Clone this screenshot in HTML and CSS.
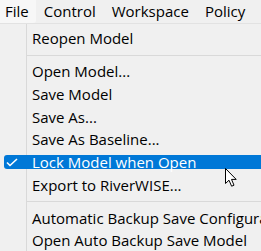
FILE: index.html
```html
<!DOCTYPE html>
<html lang="en">
<head>
    <meta charset="UTF-8">
    <meta name="viewport" content="width=device-width, initial-scale=1.0">
    <title>File Menu</title>
    <link rel="stylesheet" href="styles.css">
</head>
<body>
    <div class="menubar">
        <div class="menubar-item open">File</div>
        <div class="menubar-item">Control</div>
        <div class="menubar-item">Workspace</div>
        <div class="menubar-item">Policy</div>
    </div>

    <div class="dropdown">
        <div class="item"><div class="bar"><span class="mark"></span>Reopen Model</div></div>
        <div class="separator"></div>
        <div class="item"><div class="bar"><span class="mark"></span>Open Model...</div></div>
        <div class="item"><div class="bar"><span class="mark"></span>Save Model</div></div>
        <div class="item"><div class="bar"><span class="mark"></span>Save As...</div></div>
        <div class="item"><div class="bar"><span class="mark"></span>Save As Baseline...</div></div>
        <div class="item active">
            <div class="bar">
                <span class="mark">
                    <svg width="12" height="9" viewBox="0 0 12 9">
                        <polyline points="1,4.5 4,7.5 11,1" fill="none" stroke="#fff" stroke-width="1.6"/>
                    </svg>
                </span>Lock Model when Open
            </div>
        </div>
        <div class="item"><div class="bar"><span class="mark"></span>Export to RiverWISE...</div></div>
        <div class="separator"></div>
        <div class="item"><div class="bar"><span class="mark"></span>Automatic Backup Save Configuration...</div></div>
        <div class="item"><div class="bar"><span class="mark"></span>Open Auto Backup Save Model</div></div>
    </div>

    <!-- mouse pointer over the menu -->
    <svg class="cursor" width="13" height="20" viewBox="0 0 13 20">
        <path d="M0.5 0.5 L0.5 15.5 L4 12.2 L6.6 18.2 L9 17.2 L6.5 11.4 L11.2 11.4 Z" fill="#fff" stroke="#000" stroke-width="1" stroke-linejoin="miter"/>
    </svg>
</body>
</html>
```

FILE: styles.css
```css
body {
    margin: 0;
    background: #f0f0f0;
    color: #000;
    font-family: 'Open Sans', 'Noto Sans', sans-serif;
    font-size: 15px;
    overflow: hidden;
    white-space: nowrap;
    position: relative;
    height: 100vh;
}

.menubar {
    display: flex;
    height: 23px;
    line-height: 23px;
}

.menubar-item {
    padding: 0 8px;
}

.menubar-item.open {
    padding: 0 7px 0 5px;
    background: #f7f7f7;
    border-radius: 0 0 3px 0;
}

.dropdown {
    border-top: 1px solid #e2e2e2;
    padding-top: 3px;
    width: 320px;
    /* icon gutter with its divider */
    background: linear-gradient(to right, #f0f0f0 26px, #d9d9d9 26px, #d9d9d9 27px, #f0f0f0 27px);
}

.item {
    height: 22.75px;
    display: flex;
    align-items: center;
}

.bar {
    flex: 1;
    margin-left: 4px;
    height: 14px;
    line-height: 14px;
    display: flex;
    align-items: center;
    border-radius: 3px 0 0 3px;
}

.mark {
    width: 28px;
    flex: none;
    display: flex;
    align-items: center;
    padding-left: 2px;
    box-sizing: border-box;
}

.item.active .bar {
    background: #0078d7;
    color: #fff;
}

.separator {
    height: 1px;
    margin: 5px 0 4px 27px;
    background: #d9d9d9;
}

.cursor {
    position: absolute;
    left: 225px;
    top: 168px;
}
```
